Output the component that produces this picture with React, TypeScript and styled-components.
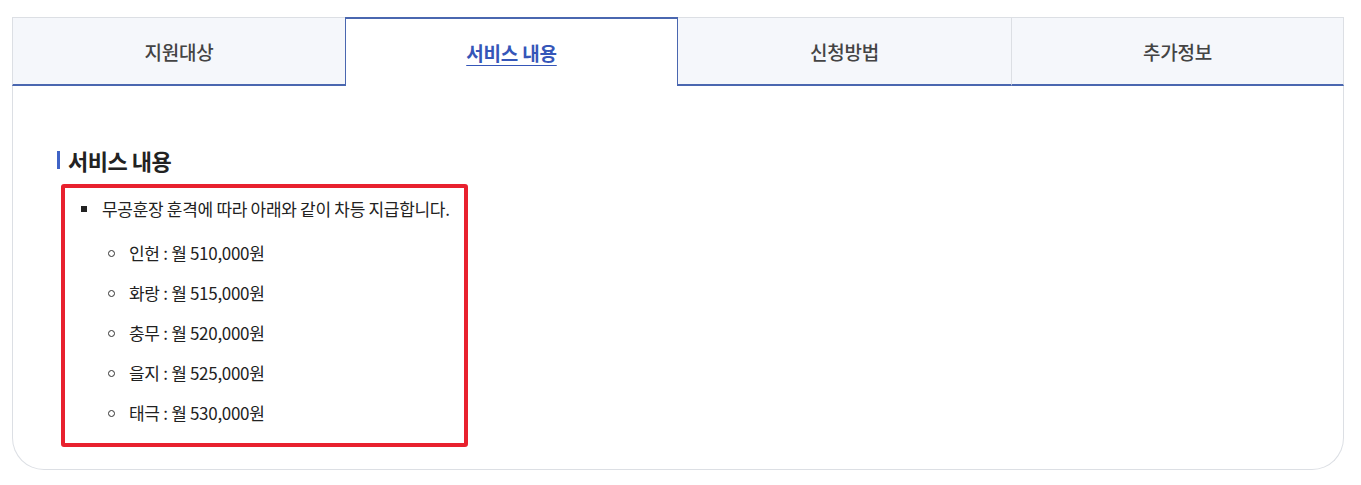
import React from "react";
import styled, { createGlobalStyle, css } from "styled-components";

const GlobalStyle = createGlobalStyle`
  html, body { margin: 0; padding: 0; background: #fff; }
  body { font-family: "Noto Sans CJK KR", "Noto Sans", sans-serif; color: #222; }
  * { box-sizing: border-box; }
`;

const Page = styled.div`
  padding: 17px 17px 15px 12px;
`;

const TabList = styled.div`
  display: grid;
  grid-template-columns: repeat(4, 1fr);
`;

const Tab = styled.button<{ $active?: boolean; $leftLine?: boolean; $rightLine?: boolean }>`
  height: 69px;
  margin: 0;
  padding: 0;
  font-family: inherit;
  font-size: 19px;
  font-weight: 500;
  letter-spacing: -0.2px;
  color: #444;
  background: #f5f7fb;
  border: 0;
  border-top: 1px solid #dcdfe4;
  border-bottom: 2px solid #4a67b0;
  border-left: ${(p) => (p.$leftLine ? "1px solid #dcdfe4" : "0")};
  border-right: ${(p) => (p.$rightLine ? "1px solid #dcdfe4" : "0")};
  cursor: pointer;
  ${(p) =>
    p.$active &&
    css`
      background: #fff;
      color: #3556b8;
      font-weight: 700;
      text-decoration: underline;
      text-underline-offset: 4px;
      border: 1px solid #4a67b0;
      border-top: 2px solid #4a67b0;
      border-bottom: 0;
    `}
`;

const Panel = styled.div`
  height: 384px;
  border: 1px solid #dcdfe4;
  border-top: 0;
  border-radius: 0 0 32px 32px;
  padding: 62px 0 0 44px;
`;

const Heading = styled.h3`
  margin: 0;
  display: flex;
  align-items: center;
  gap: 8px;
  font-size: 22px;
  line-height: 24px;
  font-weight: 700;
  color: #222;
  letter-spacing: -0.5px;
`;

const HeadingBar = styled.span`
  flex: none;
  width: 3px;
  height: 18px;
  background: #3f63c6;
`;

const Highlight = styled.div`
  width: 407px;
  margin: 12px 0 0 4px;
  border: 4px solid #e8212e;
  border-radius: 3px;
  padding: 9px 12px 18px 16px;
`;

const MainList = styled.ul`
  list-style: none;
  margin: 0;
  padding: 0;
`;

const MainItem = styled.li`
  display: grid;
  grid-template-columns: 21px 1fr;
  align-items: start;
  font-size: 17px;
  line-height: 24px;
  letter-spacing: -0.3px;
  color: #222;
`;

const Square = styled.span`
  width: 6px;
  height: 6px;
  margin-top: 9px;
  background: #222;
`;

const SubList = styled.ul`
  list-style: none;
  margin: 20px 0 0 6px;
  padding: 0;
  display: flex;
  flex-direction: column;
  gap: 16px;
`;

const SubItem = styled.li`
  display: flex;
  align-items: center;
  gap: 14px;
  font-size: 17px;
  line-height: 24px;
  letter-spacing: -0.3px;
  color: #222;
`;

const Circle = styled.span`
  width: 7px;
  height: 7px;
  border: 1px solid #333;
  border-radius: 50%;
  flex: none;
`;

const tabs = ["지원대상", "서비스 내용", "신청방법", "추가정보"];
const amounts = [
  ["인헌", "510,000"],
  ["화랑", "515,000"],
  ["충무", "520,000"],
  ["을지", "525,000"],
  ["태극", "530,000"],
];

export default function App() {
  const active = 1;
  return (
    <Page>
      <GlobalStyle />
      <TabList>
        {tabs.map((t, i) => (
          <Tab
            key={t}
            $active={i === active}
            $leftLine={i === 0 || i === 3}
            $rightLine={i === 3}
          >
            {t}
          </Tab>
        ))}
      </TabList>
      <Panel>
        <Heading>
          <HeadingBar />
          서비스 내용
        </Heading>
        <Highlight>
          <MainList>
            <MainItem>
              <Square />
              <div>
                무공훈장 훈격에 따라 아래와 같이 차등 지급합니다.
                <SubList>
                  {amounts.map(([n, a]) => (
                    <SubItem key={n}>
                      <Circle />
                      {n} : 월 {a}원
                    </SubItem>
                  ))}
                </SubList>
              </div>
            </MainItem>
          </MainList>
        </Highlight>
      </Panel>
    </Page>
  );
}
